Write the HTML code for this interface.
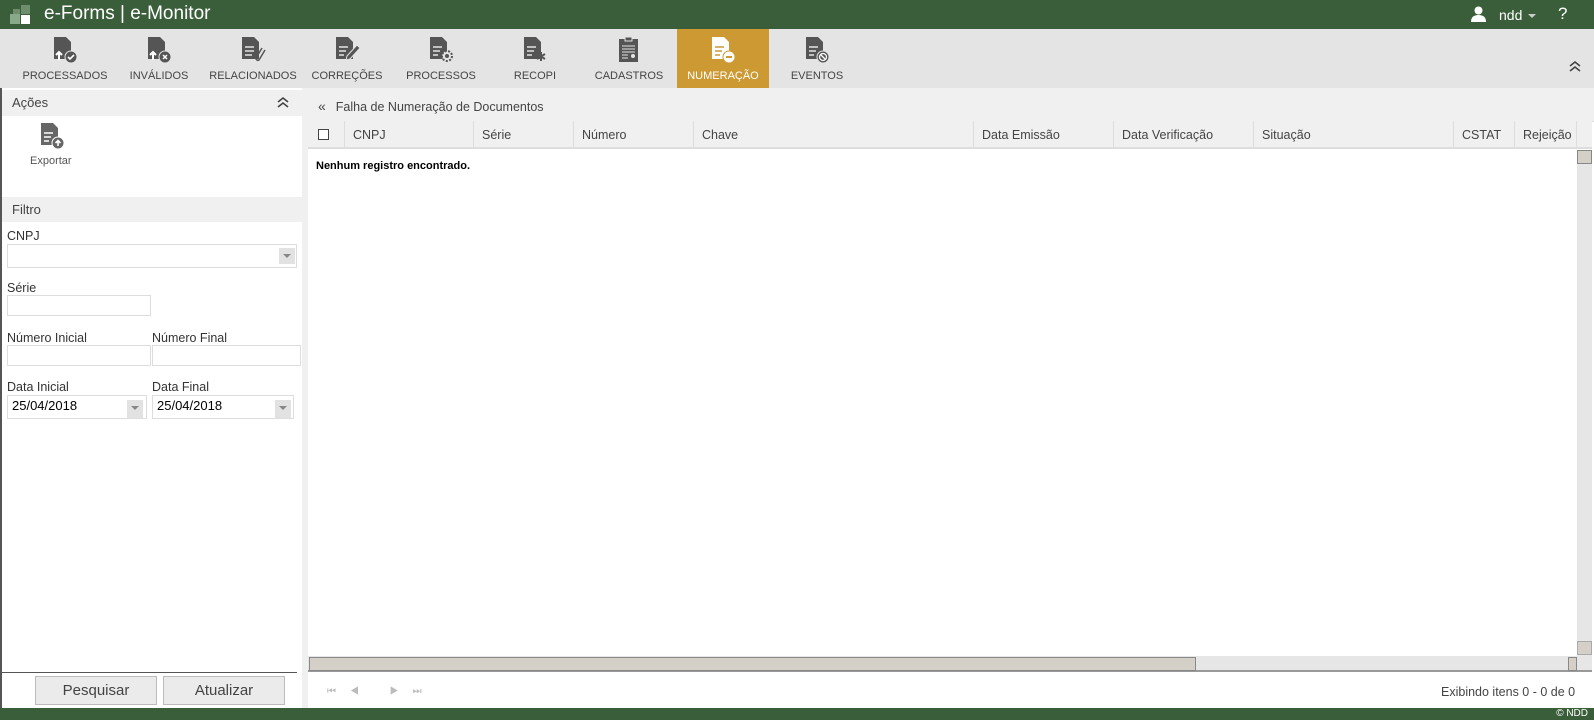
<!DOCTYPE html>
<html><head><meta charset="utf-8"><style>
*{box-sizing:border-box;margin:0;padding:0}
body{width:1594px;height:720px;overflow:hidden;background:#f0f0f0;font-family:"Liberation Sans",sans-serif;font-size:12px;color:#333;position:relative}
.abs{position:absolute}
.top{left:0;top:0;width:1594px;height:29px;background:#3a5e3a;color:#fff}
.tb{left:0;top:29px;width:1594px;height:59px;background:#e4e4e4}
.tab{position:absolute;top:0;width:92px;height:59px;text-align:center;font-size:11px;color:#444}
.tab svg{position:absolute;left:33px;top:7px}
.tab span{position:absolute;left:0;right:0;top:41px}
.tab.on{background:#cc9933;color:#fff}
.hd{background:#f0f0f0;font-size:13px;color:#444}
.inp{position:absolute;border:1px solid #ddd;background:#fff;height:21px}
.lbl{position:absolute;font-size:12.5px;color:#333}
.dd{position:absolute;width:16px;height:16px;background:#e2e2e2}
.dd:after{content:"";position:absolute;left:4px;top:6px;border:4px solid transparent;border-top:4px solid #888}
.th{position:absolute;top:0;height:27px;border-right:1px solid #ddd;padding:7px 8px;font-size:12.5px;color:#444}
.btn{position:absolute;top:676px;height:29px;border:1px solid #bbb;background:#ebebeb;font-size:15px;color:#444;text-align:center;line-height:27px}
</style></head><body>
<div class="abs top">
 <svg class="abs" style="left:10px;top:5px" width="22" height="20"><rect x="0" y="9" width="10" height="10" fill="#8aa88a"/><rect x="11" y="0" width="9" height="9" fill="#6d8d6d"/><rect x="11" y="10" width="9" height="9" fill="#fff"/><rect x="3" y="4" width="7" height="5" fill="#6d8d6d"/></svg>
 <div class="abs" style="left:44px;top:3px;font-size:19px">e-Forms | e-Monitor</div>
 <svg class="abs" style="left:1470px;top:6px" width="17" height="16"><circle cx="8.5" cy="4.5" r="4" fill="#fff"/><path d="M1 16 Q1 9 8.5 9 Q16 9 16 16Z" fill="#fff"/></svg>
 <div class="abs" style="left:1499px;top:7px;font-size:14px">ndd</div>
 <div class="abs" style="left:1528px;top:14px;border:4px solid transparent;border-top:4px solid #ccc"></div>
 <div class="abs" style="left:1558px;top:4px;font-size:17px">?</div>
</div>
<div class="abs tb">
 <div class="tab" style="left:19px"><svg width="26" height="28"><path d="M2 1h12l5 5v17H2z" fill="#555"/><circle cx="19" cy="21" r="6" fill="#555" stroke="#e4e4e4"/><path d="M16 21l2 2 4-4" stroke="#fff" stroke-width="1.6" fill="none"/><path d="M7 24v-8M4 19l3-3 3 3" stroke="#fff" stroke-width="2" fill="none"/></svg><span>PROCESSADOS</span></div>
 <div class="tab" style="left:113px"><svg width="26" height="28"><path d="M2 1h12l5 5v17H2z" fill="#555"/><circle cx="19" cy="21" r="6" fill="#555" stroke="#e4e4e4"/><path d="M17 19l4 4M21 19l-4 4" stroke="#fff" stroke-width="1.5"/><path d="M7 24v-8M4 19l3-3 3 3" stroke="#fff" stroke-width="2" fill="none"/></svg><span>INVÁLIDOS</span></div>
 <div class="tab" style="left:207px"><svg width="26" height="28"><path d="M2 1h12l5 5v17H2z" fill="#555"/><path d="M5 11h9M5 15h9M5 19h7" stroke="#e4e4e4" stroke-width="1.5"/><path d="M22 12l-6 10a2 2 0 0 0 3 2l6-10" stroke="#555" stroke-width="1.5" fill="none"/></svg><span>RELACIONADOS</span></div>
 <div class="tab" style="left:301px"><svg width="26" height="28"><path d="M2 1h12l5 5v17H2z" fill="#555"/><path d="M5 11h9M5 15h7M5 19h5" stroke="#e4e4e4" stroke-width="1.5"/><path d="M23 9l3 3-10 11-4 1 1-4z" fill="#555" stroke="#e4e4e4"/></svg><span>CORREÇÕES</span></div>
 <div class="tab" style="left:395px"><svg width="26" height="28"><path d="M2 1h12l5 5v17H2z" fill="#555"/><path d="M5 11h9M5 15h7M5 19h5" stroke="#e4e4e4" stroke-width="1.5"/><circle cx="19" cy="20" r="5" fill="#e4e4e4" stroke="#555" stroke-width="2" stroke-dasharray="2 1.5"/><circle cx="19" cy="20" r="2" fill="#555"/></svg><span>PROCESSOS</span></div>
 <div class="tab" style="left:489px"><svg width="26" height="28"><path d="M2 1h12l5 5v17H2z" fill="#555"/><path d="M5 11h9M5 15h7M5 19h5" stroke="#e4e4e4" stroke-width="1.5"/><path d="M19 16v9M15 18l8 5M23 18l-8 5" stroke="#555" stroke-width="2"/></svg><span>RECOPI</span></div>
 <div class="tab" style="left:583px"><svg width="26" height="28"><rect x="3" y="3" width="19" height="23" fill="#555"/><rect x="9" y="1" width="7" height="4" fill="#555" stroke="#e4e4e4"/><path d="M6 10h13M6 13h13M6 16h13M6 19h6M6 22h6" stroke="#e4e4e4"/><circle cx="17" cy="20" r="2" fill="#e4e4e4"/></svg><span>CADASTROS</span></div>
 <div class="tab on" style="left:677px"><svg width="26" height="28"><path d="M2 1h12l5 5v17H2z" fill="#fff"/><path d="M5 11h9M5 15h7M5 19h5" stroke="#cc9933" stroke-width="1.5"/><circle cx="19" cy="21" r="6" fill="#fff" stroke="#cc9933"/><path d="M16 21h6" stroke="#cc9933" stroke-width="2"/></svg><span>NUMERAÇÃO</span></div>
 <div class="tab" style="left:771px"><svg width="26" height="28"><path d="M2 1h12l5 5v17H2z" fill="#555"/><path d="M5 11h9M5 15h7M5 19h5" stroke="#e4e4e4" stroke-width="1.5"/><circle cx="19" cy="21" r="6" fill="#555" stroke="#e4e4e4"/><circle cx="19" cy="21" r="3.5" fill="none" stroke="#fff" stroke-width="1.3"/><path d="M17 19l4 4" stroke="#fff" stroke-width="1.3"/></svg><span>EVENTOS</span></div>
 <svg class="abs" style="left:1568px;top:31px" width="14" height="12"><path d="M2 6l5-4 5 4M2 11l5-4 5 4" stroke="#444" stroke-width="1.6" fill="none"/></svg>
</div>
<div class="abs" style="left:0;top:88px;width:302px;height:620px;background:#fff;border-left:2px solid #555"></div>
<div class="abs hd" style="left:2px;top:90px;width:300px;height:26px;padding:5px 10px">Ações<svg style="position:absolute;right:12px;top:6px" width="14" height="12"><path d="M2 6l5-4 5 4M2 11l5-4 5 4" stroke="#444" stroke-width="1.6" fill="none"/></svg></div>
<svg class="abs" style="left:39px;top:122px" width="26" height="28"><path d="M2 1h12l5 5v17H2z" fill="#666"/><path d="M5 11h9M5 15h7M5 19h5" stroke="#fff" stroke-width="1.5"/><circle cx="19" cy="21" r="6" fill="#666" stroke="#fff"/><path d="M19 24v-5M16.5 21l2.5-2.5 2.5 2.5" stroke="#fff" stroke-width="1.6" fill="none"/></svg>
<div class="abs" style="left:30px;top:155px;font-size:11px;color:#555">Exportar</div>
<div class="abs hd" style="left:2px;top:197px;width:300px;height:25px;padding:5px 10px">Filtro</div>
<div class="lbl" style="left:7px;top:229px">CNPJ</div>
<div class="inp" style="left:7px;top:244px;width:290px;height:24px"></div><div class="dd" style="left:279px;top:248px"></div>
<div class="lbl" style="left:7px;top:281px">Série</div>
<div class="inp" style="left:7px;top:295px;width:144px"></div>
<div class="lbl" style="left:7px;top:331px">Número Inicial</div>
<div class="lbl" style="left:152px;top:331px">Número Final</div>
<div class="inp" style="left:7px;top:345px;width:144px"></div>
<div class="inp" style="left:152px;top:345px;width:149px"></div>
<div class="lbl" style="left:7px;top:380px">Data Inicial</div>
<div class="lbl" style="left:152px;top:380px">Data Final</div>
<div class="inp" style="left:7px;top:395px;width:140px;height:24px;font-size:13px;color:#000;padding:2px 4px">25/04/2018</div><div class="dd" style="left:127px;top:400px;height:18px"></div>
<div class="inp" style="left:152px;top:395px;width:142px;height:24px;font-size:13px;color:#000;padding:2px 4px">25/04/2018</div><div class="dd" style="left:275px;top:400px;height:18px"></div>
<div class="abs" style="left:2px;top:672px;width:295px;height:1px;background:#555"></div>
<div class="btn" style="left:35px;width:122px">Pesquisar</div>
<div class="btn" style="left:163px;width:122px">Atualizar</div>
<div class="abs hd" style="left:308px;top:92px;width:1286px;height:28px;padding:6px 10px;font-size:12.5px"><span style="font-size:14px;margin-right:10px">«</span>Falha de Numeração de Documentos</div>
<div class="abs" style="left:308px;top:121px;width:1286px;height:587px;background:#fff;border-top:1px solid #ddd"></div>
<div class="abs" style="left:308px;top:121px;width:1284px;height:28px;background:#f0f0f0;border-bottom:2px solid #ddd">
 <div class="th" style="left:0;width:37px"><div style="width:11px;height:11px;border:1px solid #444;background:#fff;margin:1px 2px"></div></div>
 <div class="th" style="left:37px;width:129px">CNPJ</div>
 <div class="th" style="left:166px;width:100px">Série</div>
 <div class="th" style="left:266px;width:120px">Número</div>
 <div class="th" style="left:386px;width:280px">Chave</div>
 <div class="th" style="left:666px;width:140px">Data Emissão</div>
 <div class="th" style="left:806px;width:140px">Data Verificação</div>
 <div class="th" style="left:946px;width:200px">Situação</div>
 <div class="th" style="left:1146px;width:61px">CSTAT</div>
 <div class="th" style="left:1207px;width:62px">Rejeição</div>
</div>
<div class="abs" style="left:316px;top:160px;font-size:11px;font-weight:bold;color:#000">Nenhum registro encontrado.</div>
<div class="abs" style="left:1577px;top:150px;width:15px;height:506px;background:#e6e6e6"></div>
<div class="abs" style="left:1577px;top:150px;width:15px;height:14px;background:#d4d0c8;border:1px solid #888"></div>
<div class="abs" style="left:1577px;top:641px;width:15px;height:14px;background:#d4d0c8;border:1px solid #aaa"></div>
<div class="abs" style="left:308px;top:656px;width:1284px;height:16px;background:#e6e6e6;border-bottom:2px solid #999"></div>
<div class="abs" style="left:309px;top:657px;width:887px;height:14px;background:#d4d0c8;border:1px solid #888"></div>
<div class="abs" style="left:1568px;top:657px;width:9px;height:14px;background:#d4d0c8;border:1px solid #888"></div>
<div class="abs" style="left:327px;top:686px;font-size:10px;color:#bbb;letter-spacing:14px">⏮◀ ▶⏭</div>
<div class="abs" style="left:1441px;top:685px;font-size:12.5px;color:#444">Exibindo itens 0 - 0 de 0</div>
<div class="abs" style="left:0;top:708px;width:1594px;height:12px;background:#3a5e3a;color:#fff;font-size:10px;text-align:right;padding-right:6px;line-height:12px">© NDD</div>
</body></html>
